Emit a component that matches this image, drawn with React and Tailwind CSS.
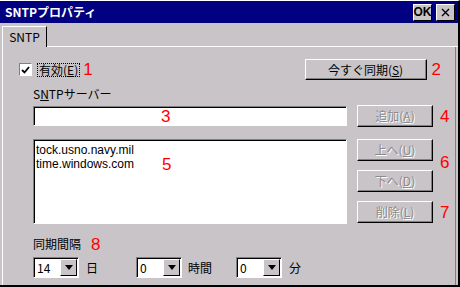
import React from 'react';

const font = { fontFamily: '"Noto Sans CJK JP", "Liberation Sans", sans-serif' };

const Btn = ({ children, disabled, className = '' }) => (
    <div className={`flex items-center justify-center bg-[#c8c4c8] border border-t-white border-l-white border-r-black border-b-black shadow-[inset_-1px_-1px_0_#808080] text-[12px] leading-none ${disabled ? 'text-[#8c8a8c] [text-shadow:1px_1px_0_#fff]' : 'text-black'} ${className}`}>
        {children}
    </div>
);

const Num = ({ children, className = '' }) => (
    <span className={`text-[#ff0000] text-[17px] leading-none ${className}`} style={{ fontFamily: '"Liberation Sans", sans-serif' }}>{children}</span>
);

const Combo = ({ value }) => (
    <div className="flex w-[46px] h-[21px] bg-white border border-t-[#808080] border-l-[#808080] border-r-white border-b-white shadow-[inset_1px_1px_0_#000]">
        <span className="flex-1 pl-[3px] pt-[2px] text-[12px] leading-[16px]">{value}</span>
        <div className="w-[17px] h-[17px] mt-[1px] mr-[1px] flex items-center justify-center bg-[#c8c4c8] border border-t-white border-l-white border-r-black border-b-black">
            <svg width="8" height="5" viewBox="0 0 8 5"><path d="M0 0h8L4 5z" fill="#000" /></svg>
        </div>
    </div>
);

export default function App() {
    return (
        <div className="w-[460px] h-[287px] bg-[#c8c4c8] border-t border-t-white border-r-2 border-r-black border-b-2 border-b-black flex flex-col overflow-hidden" style={font}>
            {/* Title bar */}
            <div className="h-[22px] bg-[#000080] flex items-center justify-between pl-[5px] pr-[3px]">
                <span className="text-white font-bold text-[12px] leading-none">SNTPプロパティ</span>
                <div className="flex gap-[4px]">
                    <div className="w-[19px] h-[17px] bg-[#c8c4c8] border border-t-white border-l-white border-r-black border-b-black flex items-center justify-center text-[12px] font-bold leading-none" style={{ fontFamily: '"Liberation Sans", sans-serif' }}>OK</div>
                    <div className="w-[19px] h-[17px] bg-[#c8c4c8] border border-t-white border-l-white border-r-black border-b-black flex items-center justify-center">
                        <svg width="9" height="9" viewBox="0 0 9 9"><path d="M1 1l7 7M8 1l-7 7" stroke="#000" strokeWidth="1.4" /></svg>
                    </div>
                </div>
            </div>

            {/* Tabs */}
            <div className="flex mt-[3px] pl-[2px]">
                <div className="w-[45px] h-[21px] border-t border-l border-t-white border-l-white border-r border-r-black flex items-center justify-center text-[12px] leading-none">SNTP</div>
                <div className="flex-1 border-b border-b-white"></div>
            </div>

            {/* Panel */}
            <div className="flex-1 mx-[2px] border-l border-l-white border-r border-r-[#808080] relative">
                {/* Row 1 */}
                <div className="flex items-center mt-[12px] h-[21px]">
                    <div className="ml-[16px] w-[13px] h-[13px] bg-white border border-t-[#808080] border-l-[#808080] border-r-white border-b-white flex items-center justify-center">
                        <svg width="9" height="8" viewBox="0 0 9 8"><path d="M1 4l2.5 2.5L8 1" stroke="#000" strokeWidth="1.8" fill="none" /></svg>
                    </div>
                    <span className="ml-[6px] text-[12px] leading-none outline-1 outline-dotted outline-black px-[1px]">有効(<u>E</u>)</span>
                    <Num className="ml-[4px]">1</Num>
                    <Btn className="ml-auto w-[122px] h-[21px]">今すぐ同期(<u>S</u>)</Btn>
                    <Num className="ml-[5px] mr-[14px]">2</Num>
                </div>

                {/* Server label */}
                <div className="ml-[30px] mt-[7px] text-[12px] leading-[14px]">S<u>N</u>TPサーバー</div>

                {/* Server input row */}
                <div className="flex items-center mt-[4px]">
                    <div className="ml-[30px] w-[314px] h-[20px] bg-white border border-t-[#808080] border-l-[#808080] border-r-white border-b-white shadow-[inset_1px_1px_0_#000] relative">
                        <Num className="absolute left-[127px] top-[1px]">3</Num>
                    </div>
                    <Btn disabled className="ml-[10px] w-[76px] h-[22px]">追加(<u>A</u>)</Btn>
                    <Num className="ml-[7px]">4</Num>
                </div>

                {/* List + buttons */}
                <div className="flex mt-[12px]">
                    <div className="ml-[30px] w-[314px] h-[85px] bg-white border border-t-[#808080] border-l-[#808080] border-r-white border-b-white shadow-[inset_1px_1px_0_#000] relative pl-[2px] pt-[3px] text-[12px] leading-[14px]" style={{ fontFamily: '"Liberation Sans", sans-serif' }}>
                        <div>tock.usno.navy.mil</div>
                        <div>time.windows.com</div>
                        <Num className="absolute left-[128px] top-[16px]">5</Num>
                    </div>
                    <div className="ml-[10px] flex flex-col gap-[9px]">
                        <Btn disabled className="w-[76px] h-[22px]">上へ(<u>U</u>)</Btn>
                        <Btn disabled className="w-[76px] h-[22px]">下へ(<u>D</u>)</Btn>
                        <Btn disabled className="w-[76px] h-[22px]">削除(<u>L</u>)</Btn>
                    </div>
                    <div className="ml-[7px] flex flex-col">
                        <Num className="mt-[15px]">6</Num>
                        <Num className="mt-[33px]">7</Num>
                    </div>
                </div>

                {/* Interval */}
                <div className="flex items-center ml-[30px] mt-[12px] h-[16px]">
                    <span className="text-[12px] leading-none">同期間隔</span>
                    <Num className="ml-[10px]">8</Num>
                </div>
                <div className="flex items-center ml-[30px] mt-[5px]">
                    <Combo value="14" />
                    <span className="ml-[7px] text-[12px]">日</span>
                    <div className="ml-[38px]"><Combo value="0" /></div>
                    <span className="ml-[6px] text-[12px]">時間</span>
                    <div className="ml-[24px]"><Combo value="0" /></div>
                    <span className="ml-[7px] text-[12px]">分</span>
                </div>
            </div>
        </div>
    );
}
